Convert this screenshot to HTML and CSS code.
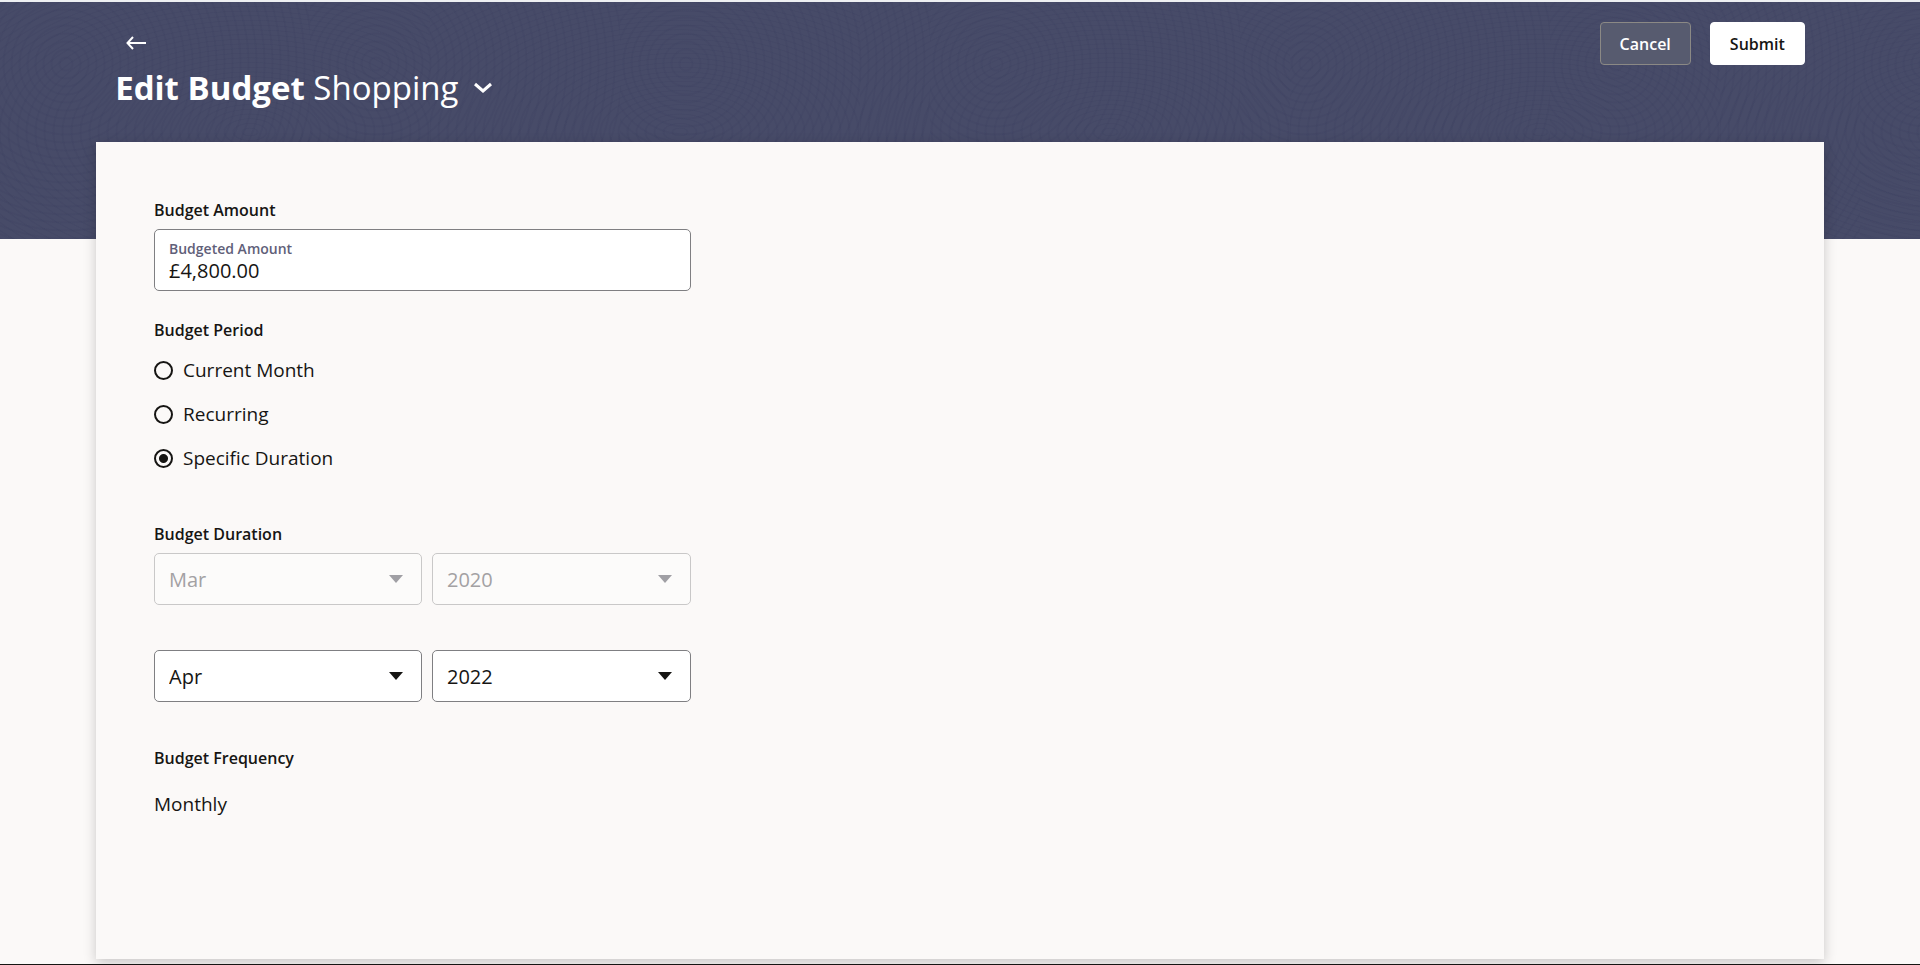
FILE: index.html
```
<!DOCTYPE html>
<html lang="en">
<head>
    <meta charset="UTF-8">
    <meta name="viewport" content="width=device-width, initial-scale=1.0">
    <title>Edit Budget</title>
    <link rel="stylesheet" href="styles.css">
</head>
<body>

    <header class="page-header">
        <div class="heading">
            <a href="#" class="back" aria-label="Back">
                <svg width="20" height="14" viewBox="0 0 20 14" fill="none" stroke="#fff" stroke-width="2">
                    <path d="M20 7H2M7 1L1.5 7L7 13"/>
                </svg>
            </a>
            <div class="title-row">
                <h1>Edit Budget <span>Shopping</span></h1>
                <button type="button" class="switch" aria-label="Choose budget">
                    <svg width="18" height="12" viewBox="0 0 18 12" fill="none" stroke="#fff" stroke-width="3">
                        <path d="M1 2L9 9L17 2"/>
                    </svg>
                </button>
            </div>
        </div>
        <div class="actions">
            <button type="button" class="btn cancel">Cancel</button>
            <button type="submit" form="budget-form" class="btn submit">Submit</button>
        </div>
    </header>

    <main class="card">
        <form id="budget-form" class="budget-form">
            <h2>Budget Amount</h2>
            <div class="amount-box">
                <label for="amount">Budgeted Amount</label>
                <input type="text" id="amount" value="£4,800.00">
            </div>

            <fieldset class="period">
                <legend>Budget Period</legend>
                <label><input type="radio" name="period">Current Month</label>
                <label><input type="radio" name="period">Recurring</label>
                <label><input type="radio" name="period" checked>Specific Duration</label>
            </fieldset>

            <h2>Budget Duration</h2>
            <div class="duration">
                <div class="select-box disabled">
                    <select aria-label="From month" disabled><option>Mar</option></select>
                </div>
                <div class="select-box disabled">
                    <select aria-label="From year" disabled><option>2020</option></select>
                </div>
                <div class="select-box">
                    <select aria-label="To month"><option>Apr</option></select>
                </div>
                <div class="select-box">
                    <select aria-label="To year"><option>2022</option></select>
                </div>
            </div>

            <h2>Budget Frequency</h2>
            <p class="frequency">Monthly</p>
        </form>
    </main>

    <footer class="page-footer"></footer>

</body>
</html>
```

FILE: styles.css
```
* {
    box-sizing: border-box;
}
body {
    margin: 0;
    border-top: 2px solid #eef0f2;
    background: #fbf9f8;
    color: #161513;
    font-family: "Open Sans", "Noto Sans", sans-serif;
    font-size: 19px;
    line-height: 24px;
}
h1, h2, p {
    margin: 0;
}
button, input, select {
    font-family: inherit;
}

/* Header */
.page-header {
    display: flex;
    justify-content: space-between;
    align-items: flex-start;
    height: 237px;
    padding: 20px 6% 0;
    background-color: #474b68;
    /* faint contour rings */
    background-image:
        repeating-radial-gradient(circle at 66px 62px, transparent 0 5px, rgba(40, 46, 80, 0.09) 6px 7px, transparent 8px),
        repeating-radial-gradient(ellipse at 250px 130px, transparent 0 6px, rgba(40, 46, 80, 0.09) 7px 8px, transparent 9px);
    background-size: 310px 237px, 430px 237px;
}
.heading {
    padding-top: 14px;
}
.back {
    display: block;
    width: 20px;
    margin-left: 11px;
}
.back svg {
    display: block;
}
.title-row {
    display: flex;
    align-items: center;
    gap: 16px;
    margin-top: 16px;
}
h1 {
    color: #fff;
    font-size: 33px;
    line-height: 44px;
    font-weight: 700;
}
h1 span {
    font-weight: 400;
}
.switch {
    padding: 0;
    border: none;
    background: none;
    cursor: pointer;
}
.switch svg {
    display: block;
}
.actions {
    display: flex;
    gap: 19px;
}
.btn {
    height: 43px;
    padding: 0 19px;
    border: 1px solid #fff;
    border-radius: 4px;
    font-size: 16px;
    font-weight: 600;
    cursor: pointer;
}
.cancel {
    border-color: #8b8985;
    background: #575b6f;
    color: #fff;
}
.submit {
    background: #fff;
    color: #161513;
}

/* Card */
.card {
    margin: -97px 5% 5px;
    min-height: 817px;
    padding: 56px 58px 100px;
    background: #fbf9f8;
    box-shadow: 0 4px 12px rgba(0, 0, 0, 0.2);
}
.budget-form {
    max-width: 537px;
}
h2, legend {
    padding: 0;
    font-size: 16px;
    line-height: 24px;
    font-weight: 600;
}
.amount-box {
    height: 62px;
    margin: 7px 0 27px;
    padding: 9px 14px 0;
    border: 1px solid #7f7f82;
    border-radius: 5px;
    background: #fff;
}
.amount-box label {
    display: block;
    color: #5f6079;
    font-size: 14px;
    line-height: 20px;
    font-weight: 600;
}
.amount-box input {
    display: block;
    width: 100%;
    height: 22px;
    padding: 0;
    border: none;
    outline: none;
    background: none;
    color: #161513;
    font-size: 20px;
}
.period {
    margin: 0 0 52px;
    padding: 0;
    border: none;
}
.period label {
    display: flex;
    align-items: center;
    gap: 10px;
    margin-top: 20px;
}
.period legend + label {
    margin-top: 16px;
}
.period input {
    appearance: none;
    width: 19px;
    height: 19px;
    margin: 0;
    border: 2px solid #161513;
    border-radius: 50%;
}
.period input:checked {
    background: radial-gradient(circle, #161513 4px, transparent 5px);
}
.duration {
    display: grid;
    grid-template-columns: 268fr 259fr;
    gap: 45px 10px;
    margin: 7px 0 44px;
}
.select-box {
    position: relative;
}
.select-box select {
    appearance: none;
    display: block;
    width: 100%;
    height: 52px;
    padding: 0 40px 0 14px;
    border: 1px solid #7f7f82;
    border-radius: 5px;
    background: #fff;
    color: #161513;
    font-size: 20px;
    opacity: 1;
}
.select-box::after {
    content: "";
    position: absolute;
    top: 22px;
    right: 19px;
    border: 7px solid transparent;
    border-top: 8px solid #161513;
    border-bottom: none;
    pointer-events: none;
}
.select-box.disabled select {
    border-color: #c9c8c8;
    background: #fcfbfa;
    color: #a3a1a3;
}
.select-box.disabled::after {
    border-top-color: #a09fa4;
}
.frequency {
    margin-top: 22px;
}
.page-footer {
    height: 1px;
    background: #161513;
}
```
